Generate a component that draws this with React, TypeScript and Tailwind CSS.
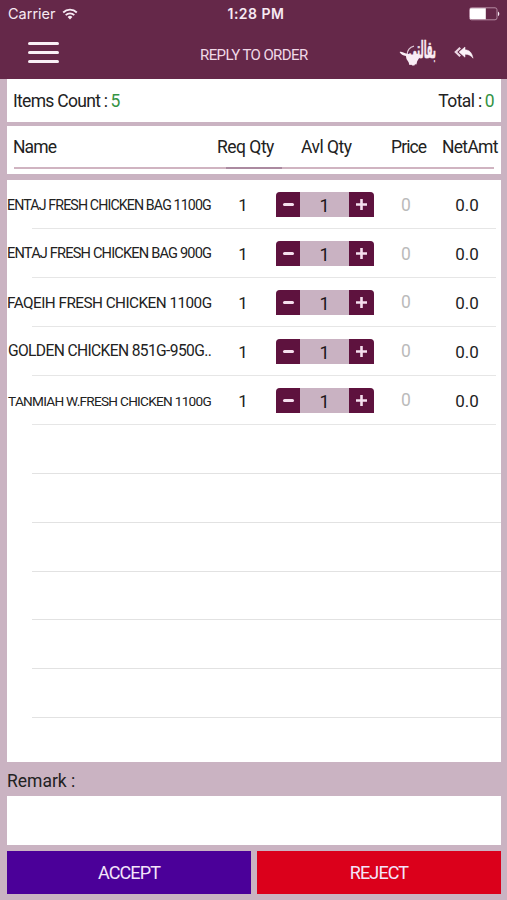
import React, { useState } from "react";

type Item = {
  name: string;
  nameClass: string;
  reqQty: number;
  price: number;
  netAmt: string;
};

const items: Item[] = [
  { name: "ENTAJ FRESH CHICKEN BAG 1100G", nameClass: "text-[14.2px] tracking-[-0.87px]", reqQty: 1, price: 0, netAmt: "0.0" },
  { name: "ENTAJ FRESH CHICKEN BAG 900G", nameClass: "text-[14.6px] tracking-[-0.83px]", reqQty: 1, price: 0, netAmt: "0.0" },
  { name: "FAQEIH FRESH CHICKEN 1100G", nameClass: "text-[15.3px] tracking-[-0.53px]", reqQty: 1, price: 0, netAmt: "0.0" },
  { name: "GOLDEN CHICKEN 851G-950G..", nameClass: "text-[15.6px] tracking-[-0.63px] pl-[1px]", reqQty: 1, price: 0, netAmt: "0.0" },
  { name: "TANMIAH W.FRESH CHICKEN 1100G", nameClass: "text-[13.6px] tracking-[-0.71px] pl-[1px]", reqQty: 1, price: 0, netAmt: "0.0" },
];

const emptyRows = [0, 1, 2, 3, 4, 5];

const WifiIcon = () => (
  <svg width="16" height="12" viewBox="0 0 16 12" fill="none">
    <path d="M1.2 4.5a9.6 9.6 0 0 1 13.6 0" stroke="#f7eaf3" strokeWidth="1.8" />
    <path d="M3.7 7.1a6.1 6.1 0 0 1 8.6 0" stroke="#f7eaf3" strokeWidth="1.8" />
    <path d="M5.6 9a3.4 3.4 0 0 1 4.8 0L8 11.5z" fill="#f7eaf3" />
  </svg>
);

const BatteryIcon = () => (
  <svg width="31" height="14" viewBox="0 0 31 14" fill="none">
    <rect x="0.5" y="0.8" width="27.5" height="12" rx="2" stroke="#b58aa3" />
    <path d="M2 1.3h14.8v11H2a1 1 0 0 1-1-1v-9a1 1 0 0 1 1-1z" fill="#fff" />
    <path d="M29 4.6c1.8.8 1.8 3.8 0 4.6z" fill="#f7eaf3" />
  </svg>
);

// Store logo: calligraphic name resting on an open hand
const StoreLogo = () => (
  <svg className="overflow-visible" width="38" height="30" viewBox="0 0 38 30">
    <g transform="translate(37 19.5) scale(0.56 1.6)">
      <text
        x="0"
        y="0"
        textAnchor="end"
        fontSize="15"
        fontWeight="700"
        fill="#f9edf5"
        stroke="#f9edf5"
        strokeWidth="0.4"
        style={{ fontFamily: '"DejaVu Sans", sans-serif' }}
      >
        بقالتي
      </text>
    </g>
    <path d="M8 17C8.3 12.5 11 9.2 15 8.2" fill="none" stroke="#dfc6d5" strokeWidth="1.2" />
    <path
      d="M.6 14c2-.7 4.3.9 6.4 1.4l3.8.8c2.4.7 5.6.2 8.2-.4l1 4.4-1.8 3-.8 3.4-1.4-.4-.6 1.4h-2.2l-.8-.8-2 .2-.8-2.8-2.1-3.2-.6-3C4.2 17.6 1.7 16.4.6 14z"
      fill="#f9edf5"
    />
  </svg>
);

const ReplyAllIcon = () => (
  <svg width="20" height="14" viewBox="0 0 20 14">
    <path d="M6.2 1.8 1.8 6l4.4 4.2" fill="none" stroke="#ecd6e3" strokeWidth="2.2" />
    <path d="M11 1v2.8c4.5.2 7 3 8 8.4-2-2.8-4.4-4-8-4v3L5 6.1z" fill="#fbf2f8" stroke="#fbf2f8" strokeWidth="0.5" />
  </svg>
);

const Stepper = () => {
  const [qty, setQty] = useState(1);

  return (
    <div className="flex h-[25px] w-[98px] shrink-0 overflow-hidden rounded-t-[4px] bg-[#c9b2c2]">
      <button
        aria-label="Decrease"
        onClick={() => setQty(Math.max(0, qty - 1))}
        className="flex w-[24px] items-center justify-center bg-[#5e123e]"
      >
        <span className="h-[3px] w-[11px] rounded-sm bg-[#f5dfee]" />
      </button>
      <span className="flex flex-1 items-center justify-center pt-[2px] text-[18px] text-[#1c1519]">{qty}</span>
      <button
        aria-label="Increase"
        onClick={() => setQty(qty + 1)}
        className="flex w-[25px] items-center justify-center bg-[#5e123e]"
      >
        <svg width="11" height="11" viewBox="0 0 11 11">
          <path d="M5.5 0v11M0 5.5h11" stroke="#f5dfee" strokeWidth="2.6" />
        </svg>
      </button>
    </div>
  );
};

export default function App() {
  return (
    <div className="flex h-[900px] w-[507px] flex-col overflow-hidden bg-[#cab3c2] font-['Roboto',sans-serif] text-[#222]">
      {/* Status bar + nav bar */}
      <header className="h-[79px] shrink-0 bg-[#652849]">
        <div className="grid h-[28px] grid-cols-3 items-center pl-[8px] pr-[7px] font-['Inter',sans-serif] text-[#f7eaf3]">
          <div className="flex items-center gap-[6px] pb-px">
            <span className="text-[14.5px]">Carrier</span>
            <WifiIcon />
          </div>
          <span className="pb-px pl-[4px] text-center text-[14px] font-semibold tracking-[0.5px]">1:28 PM</span>
          <div className="flex justify-end pb-px">
            <BatteryIcon />
          </div>
        </div>
        <div className="flex h-[51px] items-center pb-[2px] pl-[28px] pr-[33px]">
          <button aria-label="Menu" className="flex w-[31px] flex-col gap-[6px]">
            <span className="h-[3px] rounded-full bg-[#f9f0f6]" />
            <span className="h-[3px] rounded-full bg-[#f9f0f6]" />
            <span className="h-[3px] rounded-full bg-[#f9f0f6]" />
          </button>
          <h1 className="ml-[141px] whitespace-nowrap pt-[5px] text-[15px] tracking-[-0.6px] text-[#f0d9e7]">REPLY TO ORDER</h1>
          <div className="ml-auto flex items-center gap-[17px]">
            <StoreLogo />
            <ReplyAllIcon />
          </div>
        </div>
      </header>

      <main className="flex flex-1 flex-col pl-[7px] pr-[6px]">
        <section className="flex h-[43px] items-center justify-between bg-white pl-[6px] pr-[7px] pt-[2px] text-[17.5px]">
          <p className="flex gap-[3px]">
            <span className="tracking-[-0.7px]">Items Count :</span>
            <span className="text-[#359344]">5</span>
          </p>
          <p className="flex gap-[3px] tracking-[-0.6px]">
            <span>Total :</span>
            <span className="text-[#359344]">0</span>
          </p>
        </section>

        {/* Column headings */}
        <section className="mt-[4px] h-[48px] bg-white">
          <div className="flex h-[41px] items-center whitespace-nowrap pl-[6px] pr-[3px] pt-[2px] text-[17.5px]">
            <span className="w-[204px] tracking-[-0.9px]">Name</span>
            <span className="w-[84px] tracking-[-0.5px]">Req Qty</span>
            <span className="w-[90px] tracking-[-0.5px]">Avl Qty</span>
            <span className="w-[51px] tracking-[-0.9px]">Price</span>
            <span className="tracking-[-0.7px]">NetAmt</span>
          </div>
          <div className="mx-[7px] flex h-[2px]">
            <span className="w-[212px] bg-[#d0b4c1]" />
            <span className="w-[56px] bg-[#ab8aa0]" />
            <span className="flex-1 bg-[#d0b4c1]" />
          </div>
        </section>

        <ul className="mt-[6px] h-[582px] bg-white pt-[0.4px]">
          {items.map((item) => (
            <li key={item.name} className="flex h-[48.9px] flex-col">
              <div className="flex flex-1 items-center whitespace-nowrap pt-[1px]">
                <span className={`w-[224px] pt-[1px] ${item.nameClass}`}>{item.name}</span>
                <span className="w-[24px] pt-[2px] text-center text-[17px]">{item.reqQty}</span>
                <span className="ml-[21px]">
                  <Stepper />
                </span>
                <span className="ml-[22px] w-[20px] text-center text-[17.5px] text-[#bbb]">{item.price}</span>
                <span className="ml-[35px] w-[32px] pt-[2px] text-center text-[17px]">{item.netAmt}</span>
              </div>
              <div className="ml-[25px] mr-[5px] h-px bg-[#e6e6e6]" />
            </li>
          ))}
          {emptyRows.map((row) => (
            <li key={row} className="flex h-[48.9px] items-end pl-[25px]">
              <div className="h-px w-full bg-[#e2e2e2]" />
            </li>
          ))}
        </ul>

        <label htmlFor="remark" className="flex h-[34px] items-center pt-[5px] text-[17.5px]">
          Remark :
        </label>
        <input id="remark" className="h-[49px] w-full bg-white px-2 outline-none" />

        <div className="mt-[6px] flex h-[43px] gap-[6px] text-[18px] tracking-[-0.9px] text-[#f3e4fa]">
          <button className="flex-1 bg-[#4b0099]">ACCEPT</button>
          <button className="flex-1 bg-[#db001b]">REJECT</button>
        </div>
      </main>
    </div>
  );
}
